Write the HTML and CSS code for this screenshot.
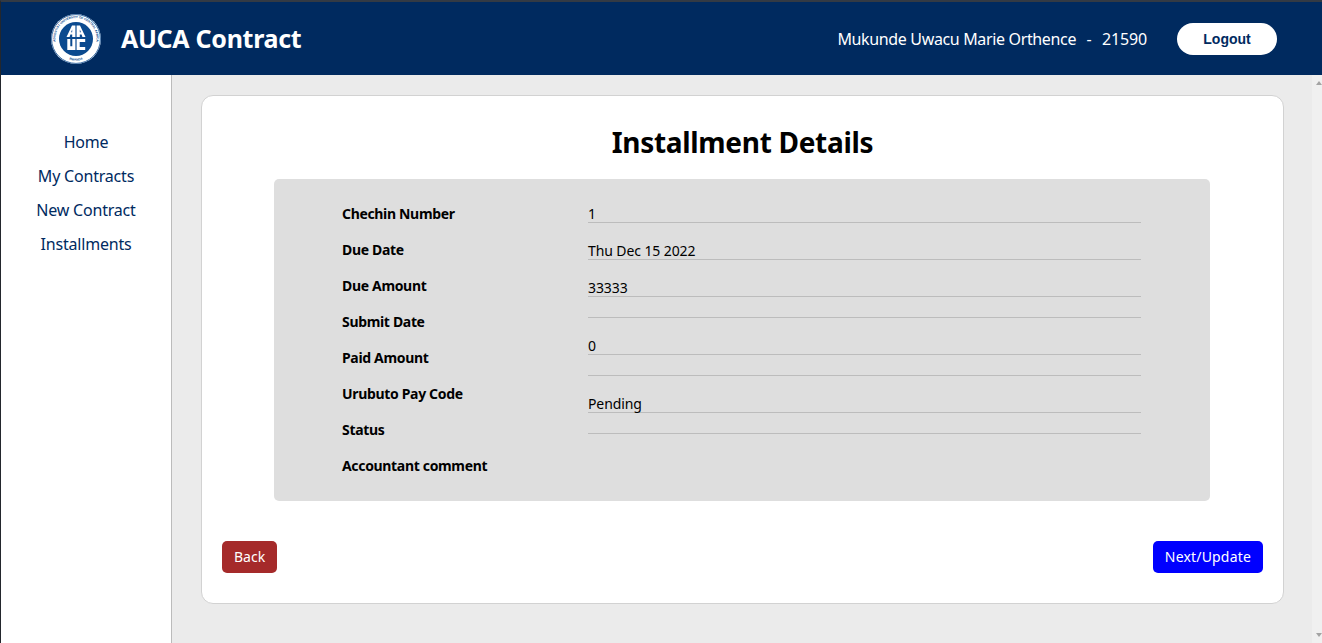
FILE: index.html
```html
<!DOCTYPE html>
<html lang="en">
<head>
<meta charset="utf-8">
<title>AUCA Contract</title>
<link rel="stylesheet" href="styles.css">
</head>
<body>
<div class="app">
  <header class="topbar">
    <div class="brand">
      <svg class="logo" viewBox="0 0 50 50" role="img" aria-label="AUCA logo">
        <defs><path id="ringTop" d="M5.4 31A20.6 20.6 0 1 1 44.6 31"/><path id="ringBottom" d="M14 43.6A21.6 21.6 0 0 0 36 43.6"/></defs>
        <circle cx="25" cy="25" r="25" fill="#fff"/>
        <circle cx="25" cy="25" r="24.4" fill="none" stroke="#0b4a8f" stroke-width=".8"/>
        <circle cx="25" cy="25" r="17" fill="#0b4a8f"/>
        <text class="ring-text"><textPath href="#ringTop" startOffset="50%" text-anchor="middle">ADVENTIST UNIVERSITY OF CENTRAL AFRICA</textPath></text>
        <text class="ring-text"><textPath href="#ringBottom" startOffset="50%" text-anchor="middle">RWANDA</textPath></text>
        <path class="mark" fill-rule="evenodd" d="M21 11.500h3.400V23h-3.200v-2.600h-1.800L18.600 23h-3.100zM21.200 15.500 20 18.200h1.200zM29 11.500h-3.400V23h3.200v-2.600h1.800l.8 2.600h3.100zM28.800 15.500 30 18.200h-1.200zM16.300 25h3v7.200h2V25h3.100v11h-8.100zM25.600 25h8.600v3h-5.500v5h5.500v3h-8.600z"/>
      </svg>
      <span class="brand-name">AUCA Contract</span>
    </div>
    <div class="account">
      <div class="user"><span class="user-name">Mukunde Uwacu Marie Orthence</span><span>-</span><span>21590</span></div>
      <button class="logout" type="button">Logout</button>
    </div>
  </header>
  <div class="body-row">
    <nav class="sidebar">
      <a href="#">Home</a>
      <a href="#">My Contracts</a>
      <a href="#">New Contract</a>
      <a href="#">Installments</a>
    </nav>
    <main class="content">
      <section class="card">
        <h1 class="title">Installment Details</h1>
        <div class="panel">
          <div class="labels">
            <div>Chechin Number</div>
            <div>Due Date</div>
            <div>Due Amount</div>
            <div>Submit Date</div>
            <div>Paid Amount</div>
            <div>Urubuto Pay Code</div>
            <div>Status</div>
            <div>Accountant comment</div>
          </div>
          <div class="values">
            <div class="value">1</div>
            <div class="value">Thu Dec 15 2022</div>
            <div class="value">33333</div>
            <div class="value"></div>
            <div class="value">0</div>
            <div class="value"></div>
            <div class="value">Pending</div>
            <div class="value"></div>
          </div>
        </div>
        <div class="actions">
          <button class="btn btn-back" type="button">Back</button>
          <button class="btn btn-next" type="button">Next/Update</button>
        </div>
      </section>
    </main>
    <div class="scrollbar"><span class="arrow-up"></span><span class="arrow-down"></span></div>
  </div>
</div>
</body>
</html>
```
FILE: styles.css
```css
* { box-sizing: border-box; }
html, body { margin: 0; height: 100%; overflow: hidden; }
body { font-family: "Noto Sans", sans-serif; color: #000; background: #ebebeb; }
.app { height: 643px; display: flex; flex-direction: column; border-top: 2px solid #333a44; border-left: 1px solid #23272d; }
.topbar { height: 73px; flex: none; background: #002a5f; display: flex; align-items: center; justify-content: space-between; padding: 0 45px 0 50px; color: #fff; }
.brand { display: flex; align-items: center; gap: 20px; }
.logo { width: 50px; height: 50px; display: block; }
.ring-text { font: 700 3.1px "Liberation Sans", sans-serif; fill: #0b4a8f; }
.mark { fill: #fff; }
.brand-name { font-size: 25px; font-weight: 700; line-height: 30px; letter-spacing: -.3px; position: relative; top: -1px; }
.account { display: flex; align-items: center; gap: 30px; }
.user { display: flex; gap: 10.500px; font-size: 16px; line-height: 20px; letter-spacing: -.17px; }
.user-name { letter-spacing: -.35px; }
.logout { width: 100px; height: 32px; border: 0; border-radius: 16px; background: #fff; color: #002a5f; font: 700 14px "Liberation Sans", sans-serif; padding: 0; }
.body-row { flex: 1; display: flex; min-height: 0; }
.sidebar { width: 171px; flex: none; background: #fff; border-right: 1px solid #bbb; display: flex; flex-direction: column; align-items: center; gap: 14px; padding-top: 57px; }
.sidebar a { color: #002a5f; text-decoration: none; font-size: 16px; line-height: 20px; letter-spacing: -.2px; }
.content { flex: 1; padding: 20px 28px 0 29px; min-width: 0; }
.card { height: 509px; background: #fff; border: 1px solid #d2d2d2; border-radius: 12px; padding: 0 20px; display: flex; flex-direction: column; }
.title { margin: 28px 0 19px; text-align: center; font-size: 28px; line-height: 36px; font-weight: 700; letter-spacing: -.3px; }
.panel { width: 936px; height: 322px; align-self: flex-start; margin-left: 52px; background: #dedede; border-radius: 5px; padding: 7px 69px 0 68px; display: flex; font-size: 14px; line-height: 16px; }
.labels { width: 246px; flex: none; font-weight: 700; letter-spacing: -.33px; }
.labels div { margin-top: 20px; height: 16px; }
.values { flex: 1; letter-spacing: -.1px; }
.value { margin-top: 20px; border-bottom: 1px solid #bcbcbc; }
.actions { display: flex; justify-content: space-between; margin-top: 40px; }
.btn { height: 32px; border: 0; border-radius: 5px; color: #fff; font-family: inherit; font-size: 14px; padding: 0 12px 2px; }
.btn-back { background: #a52a2a; }
.btn-next { background: #0000ff; letter-spacing: .18px; }
.scrollbar { width: 10px; flex: none; background: #f0f0f0; display: flex; flex-direction: column; justify-content: space-between; align-items: flex-end; padding: 6px 0; }
.arrow-up, .arrow-down { width: 0; height: 0; border-left: 3px solid transparent; border-right: 3px solid transparent; }
.arrow-up { border-bottom: 4px solid #a3a3a3; }
.arrow-down { border-top: 4px solid #a3a3a3; }
```
